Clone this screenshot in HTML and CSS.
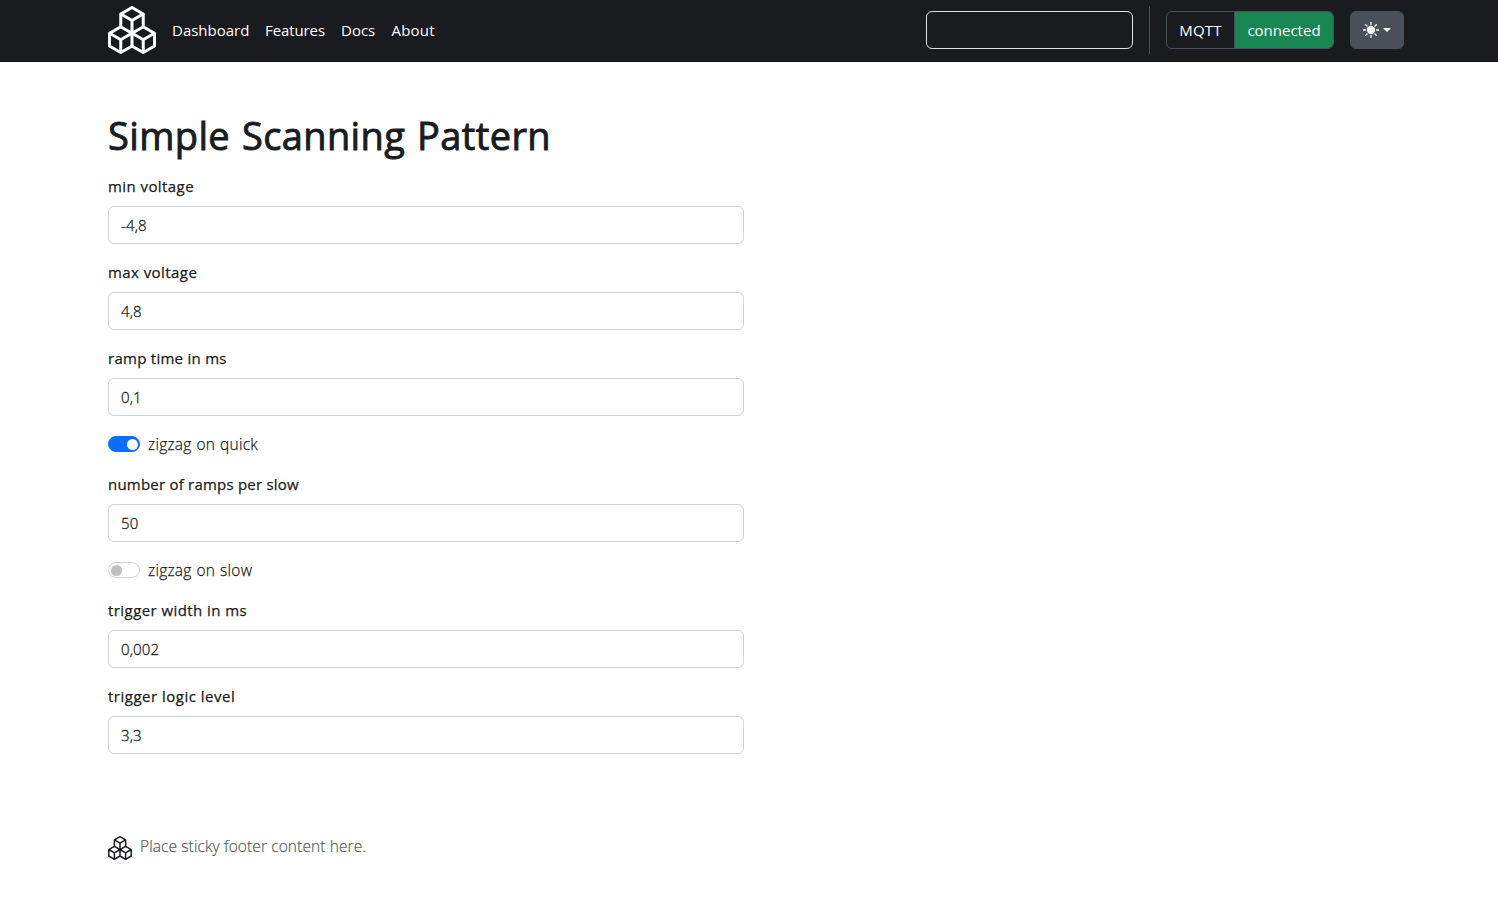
FILE: index.html
```html
<!DOCTYPE html>
<html lang="en">
<head>
<meta charset="utf-8">
<title>Simple Scanning Pattern</title>
<link rel="stylesheet" href="styles.css">
</head>
<body>
<svg class="sprite" aria-hidden="true">
  <symbol id="boxes" viewBox="0 0 16 16"><path d="M7.752.066a.5.5 0 0 1 .496 0l3.75 2.143a.5.5 0 0 1 .252.434v3.995l3.498 2A.5.5 0 0 1 16 9.07v4.286a.5.5 0 0 1-.252.434l-3.75 2.143a.5.5 0 0 1-.496 0l-3.502-2-3.502 2.001a.5.5 0 0 1-.496 0l-3.75-2.143A.5.5 0 0 1 0 13.357V9.071a.5.5 0 0 1 .252-.434L3.75 6.638V2.643a.5.5 0 0 1 .252-.434L7.752.066ZM4.25 7.504 1.508 9.071l2.742 1.567 2.742-1.567L4.25 7.504ZM7.5 9.933l-2.75 1.571v3.134l2.75-1.571V9.933Zm1 3.134 2.75 1.571v-3.134L8.5 9.933v3.134Zm.508-3.996 2.742 1.567 2.742-1.567-2.742-1.567-2.742 1.567Zm2.242-2.433V3.504L8.5 5.076V8.21l2.75-1.572ZM7.5 8.21V5.076L4.75 3.504v3.134L7.5 8.21ZM5.258 2.643 8 4.21l2.742-1.567L8 1.076 5.258 2.643ZM15 9.933l-2.75 1.571v3.134L15 13.067V9.933ZM3.75 14.638v-3.134L1 9.933v3.134l2.75 1.571Z"/></symbol>
</svg>
<header class="topbar">
  <div class="container bar">
    <svg class="logo"><use href="#boxes"/></svg>
    <nav class="nav">
      <a class="dashboard">Dashboard</a><a class="features">Features</a><a class="docs">Docs</a><a class="about">About</a>
    </nav>
    <input class="search" type="text" aria-label="Search">
    <div class="rule"></div>
    <div class="status"><span class="status-name">MQTT</span><span class="status-value">connected</span></div>
    <button class="theme" aria-label="Theme">
      <svg class="sun" viewBox="0 0 16 16"><circle cx="8" cy="8" r="4.200"/><path d="M8 .5v2M8 13.500v2M.5 8h2M13.500 8h2M2.700 2.700l1.410 1.410M11.890 11.890l1.410 1.410M13.300 2.700l-1.410 1.410M4.110 11.890l-1.410 1.410"/></svg>
      <span class="caret"></span>
    </button>
  </div>
</header>
<main class="container main">
  <h1>Simple Scanning Pattern</h1>
  <form class="form">
    <label class="label wide">min voltage</label><input class="field" value="-4,8">
    <label class="label wide">max voltage</label><input class="field" value="4,8">
    <label class="label">ramp time in ms</label><input class="field" value="0,1">
    <div class="toggle"><span class="switch on"></span><span>zigzag on quick</span></div>
    <label class="label tight">number of ramps per slow</label><input class="field" value="50">
    <div class="toggle"><span class="switch"></span><span>zigzag on slow</span></div>
    <label class="label wide">trigger width in ms</label><input class="field" value="0,002">
    <label class="label wider">trigger logic level</label><input class="field" value="3,3">
  </form>
</main>
<footer class="container footer">
  <svg class="footer-logo"><use href="#boxes"/></svg><span>Place sticky footer content here.</span>
</footer>
</body>
</html>
```
FILE: styles.css
```css
* { box-sizing: border-box; }
body {
  margin: 0;
  height: 897px;
  overflow: hidden;
  background: #fff;
  color: #1a1c20;
  font: 300 15.5px/24px "Open Sans", "Noto Sans", sans-serif;
}
.sprite { display: none; }
svg { display: block; flex: none; fill: currentColor; }
.container { width: 1320px; margin-left: 96px; padding: 0 12px; }
.topbar { height: 62px; background: #1a1b1f; border-bottom: 1px solid #131216; color: #fff; font-weight: 400; }
.bar { display: flex; align-items: center; height: 60px; }
.logo { width: 48px; height: 48px; margin-right: 8px; }
.nav { display: flex; flex: 1; }
.nav a { padding: 8px; font-size: 15px; }
.nav .dashboard { width: 93px; }
.nav .features { width: 76px; letter-spacing: -.1px; }
.nav .docs { width: 51px; }
.nav .about { margin-left: -.5px; letter-spacing: .2px; }
.search { width: 207px; height: 38px; border: 1px solid #dee2e6; border-radius: 6px; background: transparent; color: #fff; }
.rule { width: 1px; height: 48px; margin: 0 16px; background: #4d4e51; }
.status { display: flex; width: 168px; height: 38px; border: 1px solid #495057; border-radius: 6px; overflow: hidden; font-size: 15px; line-height: 36px; text-align: center; }
.status-name { width: 68px; border-right: 1px solid #495057; letter-spacing: .2px; }
.status-value { flex: 1; background: #198754; }
.theme { display: flex; align-items: center; width: 54px; height: 38px; margin-left: 16px; padding: 0 12px; border: 1px solid #495057; border-radius: 6px; background: #495057; color: #fff; }
.sun { width: 16px; height: 16px; }
.sun path { stroke: currentColor; stroke-width: 1.3px; stroke-linecap: round; }
.caret { margin-left: 4px; border: 4.8px solid transparent; border-top-color: #fff; border-bottom: 0; border-left-width: 4px; border-right-width: 4px; }
.main { padding-top: 49px; }
h1 { margin: 0 0 15px; font-size: 38px; line-height: 48px; font-weight: 400; letter-spacing: .38px; word-spacing: 1.6px; -webkit-text-stroke: .9px currentColor; }
.form { display: flex; flex-direction: column; width: 636px; }
.label { height: 24px; margin-bottom: 8px; font-size: 15px; font-weight: 400; letter-spacing: .27px; -webkit-text-stroke: .25px currentColor; }
.label.tight { letter-spacing: .22px; }
.label.wide { letter-spacing: .43px; }
.label.wider { letter-spacing: .5px; }
.field { height: 38px; margin-bottom: 16px; padding: 6px 12px; border: 1px solid #ced4da; border-radius: 6px; background: #fff; color: inherit; font: inherit; font-size: 15px; letter-spacing: .15px; -webkit-text-stroke: .3px currentColor; }
.toggle { display: flex; height: 24px; margin-bottom: 16px; letter-spacing: .25px; word-spacing: .6px; -webkit-text-stroke: .25px currentColor; }
.switch { width: 32px; height: 16px; margin: 4px 8px 0 0; padding: 1.5px; border: 1px solid #ced4da; border-radius: 8px; }
.switch::before { content: ""; display: block; width: 11px; height: 11px; border-radius: 50%; background: #bfbfbf; }
.switch.on { background: #0d6efd; border-color: #0d6efd; }
.switch.on::before { margin-left: 16px; background: #fff; }
.footer { display: flex; padding-top: 64px; color: #565b60; letter-spacing: .1px; -webkit-text-stroke: .2px currentColor; }
.footer-logo { width: 24px; height: 24px; margin: 2px 8px 0 0; color: #1a1c20; }
```
